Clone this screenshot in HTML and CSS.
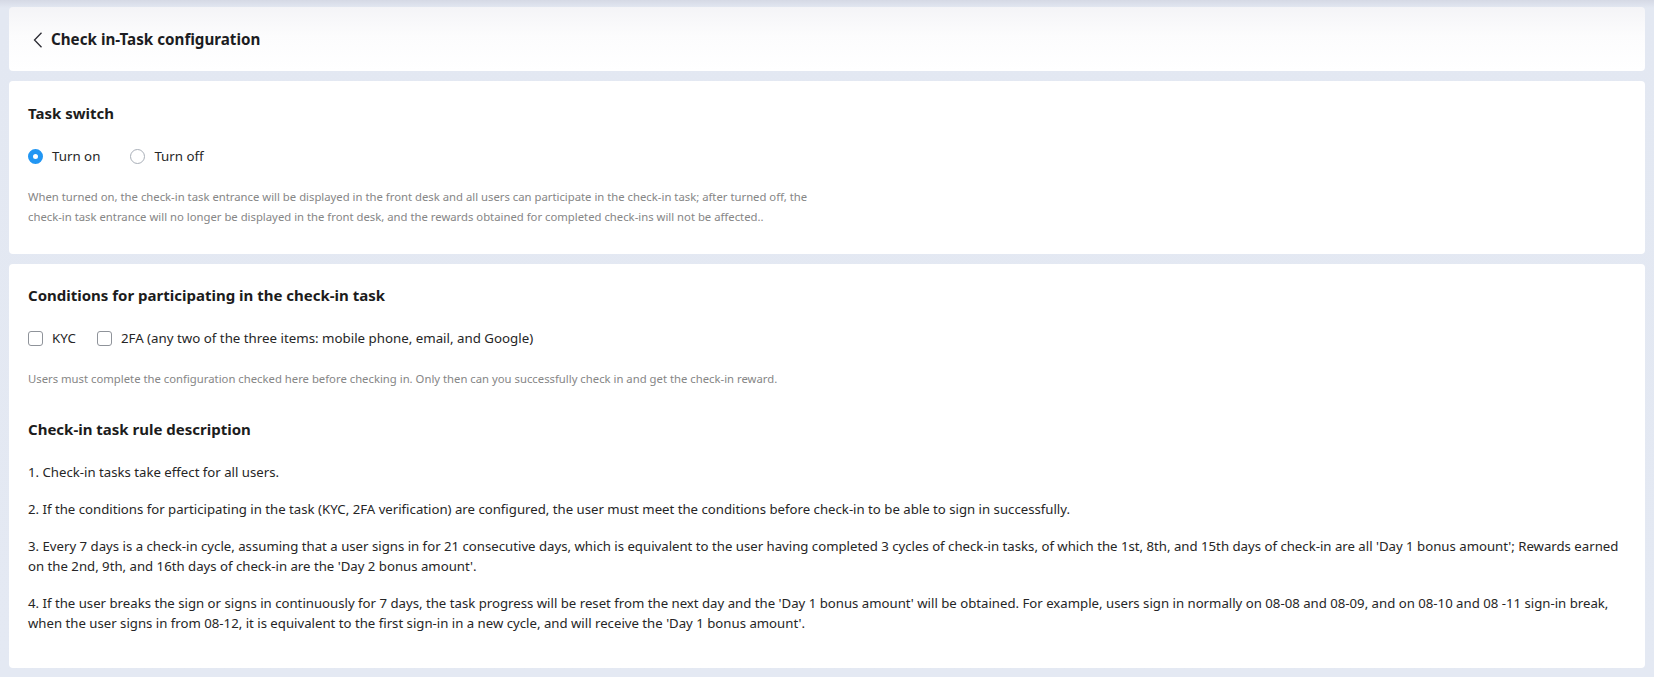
FILE: index.html
```html
<!DOCTYPE html>
<html>
<head>
<title>Check in-Task configuration</title>
<meta http-equiv="Content-Type" content="text/html; charset=utf-8" />
<link rel="stylesheet" href="styles.css">
</head>
<body>

<div class="page">
	<div class="card head">
		<a class="back" href="#">
			<svg width="10" height="16" viewBox="0 0 10 16"><path d="M8.5 0.8 L1.5 8 L8.5 15.2" fill="none" stroke="#2b2b33" stroke-width="1.3"/></svg>
		</a>
		<h1>Check in-Task configuration</h1>
	</div>

	<div class="card switch">
		<h2>Task switch</h2>
		<div class="opts">
			<label class="opt"><span class="radio on"></span>Turn on</label>
			<label class="opt"><span class="radio"></span>Turn off</label>
		</div>
		<p class="tip wide">When turned on, the check-in task entrance will be displayed in the front desk and all users can participate in the check-in task; after turned off, the check-in task entrance will no longer be displayed in the front desk, and the rewards obtained for completed check-ins will not be affected..</p>
	</div>

	<div class="card cond">
		<h2>Conditions for participating in the check-in task</h2>
		<div class="opts">
			<label class="opt"><span class="box"></span>KYC</label>
			<label class="opt"><span class="box"></span>2FA (any two of the three items: mobile phone, email, and Google)</label>
		</div>
		<p class="tip">Users must complete the configuration checked here before checking in. Only then can you successfully check in and get the check-in reward.</p>

		<h2 class="rules-title">Check-in task rule description</h2>
		<div class="rules">
			<p>1. Check-in tasks take effect for all users.</p>
			<p>2. If the conditions for participating in the task (KYC, 2FA verification) are configured, the user must meet the conditions before check-in to be able to sign in successfully.</p>
			<p>3. Every 7 days is a check-in cycle, assuming that a user signs in for 21 consecutive days, which is equivalent to the user having completed 3 cycles of check-in tasks, of which the 1st, 8th, and 15th days of check-in are all 'Day 1 bonus amount'; Rewards earned on the 2nd, 9th, and 16th days of check-in are the 'Day 2 bonus amount'.</p>
			<p>4. If the user breaks the sign or signs in continuously for 7 days, the task progress will be reset from the next day and the 'Day 1 bonus amount' will be obtained. For example, users sign in normally on 08-08 and 08-09, and on 08-10 and 08 -11 sign-in break, when the user signs in from 08-12, it is equivalent to the first sign-in in a new cycle, and will receive the 'Day 1 bonus amount'.</p>
		</div>
	</div>
</div>

</body>
</html>
```

FILE: styles.css
```css
* {margin:0;padding:0;box-sizing:border-box;}

body {background:linear-gradient(#d5d9e5 0, #e3e8f2 8px, #e4e9f3 100%);font-family:"Noto Sans", "Open Sans", sans-serif;color:#222;min-height:677px;}

.page {display:flex;flex-direction:column;gap:10px;padding:7px 9px 6px;}

.card {background:#fff;border-radius:4px;padding:22px 20px 27px 19px;}
.card h2 {font-size:15px;line-height:20px;font-weight:700;color:#1c1c1c;}

.head {display:flex;align-items:center;height:64px;padding:0 0 0 24px;background:linear-gradient(#f4f4f7 0, #fcfcfd 45%, #fff 100%);}
.head .back {display:flex;margin-right:8px;margin-top:1px;}
.head h1 {font-size:15.2px;font-weight:700;color:#1c1c22;}

.opts {display:flex;gap:30px;margin-top:23px;}
.opt {display:flex;align-items:center;font-size:13.3px;line-height:20px;color:#262626;}

.radio {width:15px;height:15px;border:1px solid #a9afb8;border-radius:50%;margin-right:9px;}
.radio.on {border:5px solid #2196f3;background:#fff;}

.box {width:15px;height:15px;border:1px solid #8f939a;border-radius:3px;margin-right:9px;}

.tip {font-size:11.3px;line-height:20px;color:#868686;margin-top:21px;}
.tip.wide {max-width:815px;}

.cond {padding:21px 20px 35px 19px;flex:1;}
.cond .opts {gap:21px;}
.rules-title {margin-top:30px;}
.rules {margin-top:23px;font-size:13.2px;line-height:20px;color:#262626;}
.rules p {margin-bottom:17px;}
.rules p:last-child {margin-bottom:0;}
```
